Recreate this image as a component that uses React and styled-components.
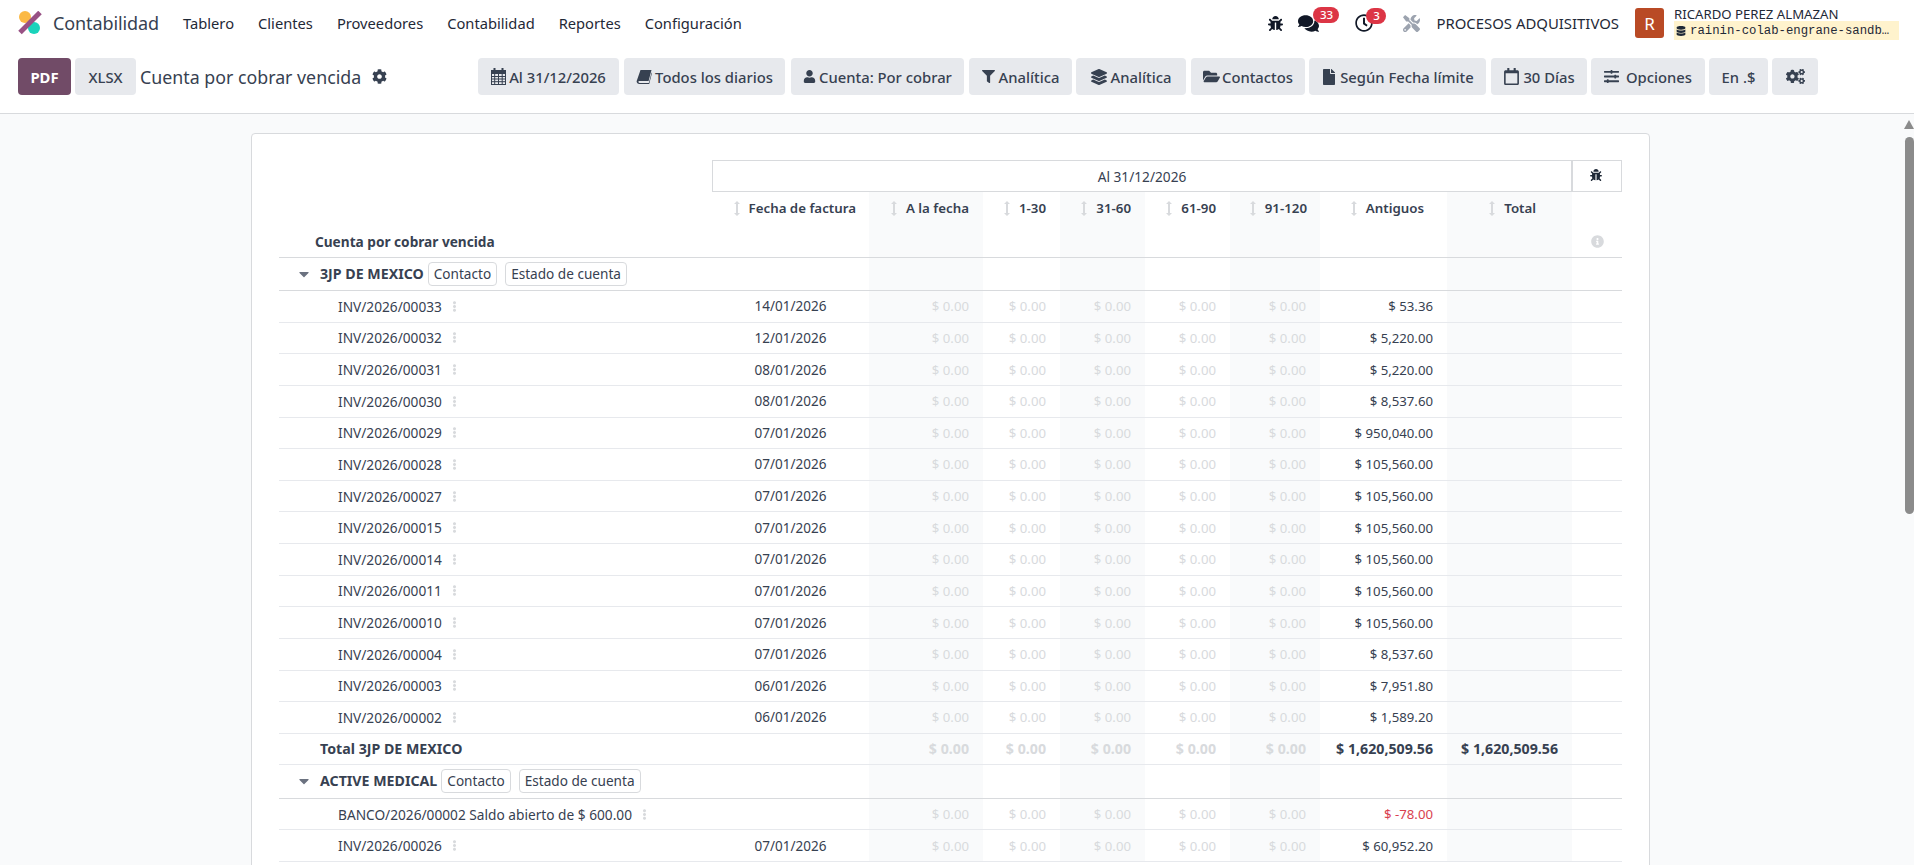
import React from "react";
import styled, { createGlobalStyle } from "styled-components";
import {
  FaBug, FaComments, FaRegClock, FaTools, FaCog, FaCogs, FaUser, FaFilter,
  FaLayerGroup, FaFolderOpen, FaFile, FaRegCalendar, FaSlidersH, FaDatabase, FaCaretDown, FaEllipsisV, FaInfoCircle,
} from "react-icons/fa";

const Global = createGlobalStyle`
  html, body { margin: 0; height: 100%; overflow: hidden; }
  body { font-family: "Noto Sans", "Open Sans", sans-serif; font-size: 14px; color: #374151; background: #fff; }
  #root { height: 100%; }
  * { box-sizing: border-box; }
`;

const Shell = styled.div`position: relative; display: flex; flex-direction: column; height: 865px; overflow: hidden;`;
const Navbar = styled.header`display: flex; align-items: center; height: 46px; padding: 0 15px 0 18px; flex: none;`;
const Logo = styled.svg`width: 24px; height: 24px; margin-right: 11px; flex: none;`;
const AppName = styled.span`font-size: 18px; margin-right: 24px; letter-spacing: -0.1px;`;
const MenuItem = styled.span`font-size: 14.7px; margin-right: 24px; color: #1f2937;`;
const Spacer = styled.div`flex: 1;`;
const SysIcon = styled.span`position: relative; display: inline-flex; align-items: center; color: #111827; font-size: ${p => p.$size || 16}px; margin-right: ${p => p.$mr || 0}px;`;
const Badge = styled.span`position: absolute; left: ${p => p.$left}px; top: -6px; height: 16px; min-width: ${p => p.$w}px; padding: 0 5px; border-radius: 8px; background: #dc3545; color: #fff; font-size: 11.5px; font-weight: 500; line-height: 16px; text-align: center;`;
const Company = styled.span`font-size: 14.9px; color: #1f2937; margin: 0 16px;`;
const Avatar = styled.span`width: 29px; height: 30px; border-radius: 3px; background: #b94a25; color: #fff; font-size: 17px; display: flex; align-items: center; justify-content: center; margin-right: 10px; flex: none;`;
const UserBox = styled.div`display: flex; flex-direction: column; width: 225px;`;
const UserName = styled.span`font-size: 13.2px; line-height: 14px; margin-top: 1px; color: #1f2937;`;
const DbName = styled.span`display: flex; align-items: center; gap: 4px; height: 19px; background: #fff3cd; font-family: "Liberation Mono", monospace; font-size: 12.3px; color: #1f2937; padding-left: 2px; white-space: nowrap; svg { font-size: 10px; }`;

const ControlPanel = styled.div`display: flex; align-items: center; height: 68px; padding: 0 0 6px 18px; border-bottom: 1px solid #d8dadd; flex: none;`;
const ActionBtn = styled.button`height: 37px; padding: 0; width: ${p => p.$w}px; margin-right: ${p => p.$mr || 0}px; border: 0; border-radius: 4px; background: ${p => (p.$primary ? "#714b67" : "#e7e9ed")}; color: ${p => (p.$primary ? "#fff" : "#374151")}; font: ${p => (p.$primary ? 700 : 500)} 14.8px "Noto Sans", sans-serif; display: inline-flex; align-items: center; justify-content: center; gap: ${p => p.$gap || 4}px; flex: none; svg { font-size: ${p => p.$icon || 15}px; }`;
const Title = styled.span`font-size: 17.8px; width: 338px; display: flex; align-items: center; gap: 11px; flex: none; margin-left: 4px; svg { font-size: 15px; }`;

const Main = styled.main`flex: 1; min-height: 0; background: #f9fafb; overflow: hidden; padding: 19px 0 0 251px;`;
const Sheet = styled.div`width: 1399px; background: #fff; border: 1px solid #d8dadd; border-radius: 4px; padding: 26px 27px;`;
const Table = styled.table`border-collapse: separate; border-spacing: 0; table-layout: fixed; width: 1343px; font-size: 13.2px;`;
const PeriodCell = styled.th`height: 32px; border: 1px solid #d8dadd; font-weight: 400; font-size: 13.7px; text-align: center; padding: 0;`;
const BugCell = styled.th`border: 1px solid #d8dadd; text-align: center; padding: 0 2px 0 0; font-size: 12px; color: #1f2937; font-weight: 400;`;
const HeadRow = styled.tr`height: 66px;`;
const HeadCell = styled.th`vertical-align: top; padding: 7px ${p => p.$pr ?? 14}px 0 0; text-align: right; font-size: 13.3px; font-weight: 600; background: ${p => (p.$shade ? "#f9fafb" : "#fff")}; border-bottom: 1px solid #d8dadd; white-space: nowrap;`;
const SortMark = styled.svg`width: 6px; height: 15px; fill: #d8dadd; margin-right: 9px; vertical-align: -3px;`;
const ReportName = styled.th`vertical-align: bottom; text-align: left; padding: 0 0 6px 36px; font-size: 13.65px; font-weight: 700; border-bottom: 1px solid #d8dadd; white-space: nowrap;`;
const InfoCell = styled.th`vertical-align: bottom; text-align: center; padding: 0 0 5px; color: #d8dadd; font-size: 13px; border-bottom: 1px solid #d8dadd;`;
const Row = styled.tr`height: ${p => p.$h || 31.64}px;`;
const Cell = styled.td`padding: 0 14px 0 0; text-align: right; white-space: nowrap; overflow: visible; border-bottom: 1px solid ${p => (p.$strong ? "#d8dadd" : "#e7e9ed")}; background: ${p => (p.$shade ? "#f9fafb" : "#fff")}; color: ${p => (p.$neg ? "#d9414f" : p.$muted ? "#d8dadd" : "#374151")}; font-weight: ${p => (p.$bold ? 700 : 400)}; font-size: ${p => (p.$bold ? "14.2px" : "13.2px")};`;
const NameCell = styled(Cell)`text-align: left; padding-left: ${p => p.$indent}px; color: #374151; font-size: ${p => (p.$bold ? "14.2px" : "13.7px")};`;
const DateCell = styled(Cell)`text-align: center; padding: 0; font-size: 13.5px;`;
const Dots = styled.span`color: #d8dadd; font-size: 11px; margin-left: 7px;`;
const Caret = styled.span`display: inline-block; width: 24px; color: #6b7280; font-size: 16px; vertical-align: -3px; line-height: 1;`;
const GroupName = styled.span`font-weight: 700; font-size: 14.2px;`;
const LinkBtn = styled.span`display: inline-block; height: 24px; line-height: 22px; padding: 0 5px; margin-left: ${p => p.$ml}px; border: 1px solid #d8dadd; border-radius: 4px; font-size: 13.6px; background: #fff;`;
const ScrollArrow = styled.div`position: absolute; right: 0; top: 120px; width: 0; height: 0; border-left: 5px solid transparent; border-right: 5px solid transparent; border-bottom: 9px solid #8b8b8b;`;
const ScrollThumb = styled.div`position: absolute; right: 0; top: 137px; width: 9.5px; height: 377px; border-radius: 5px; background: #8b8b8b;`;

const SortIcon = () => (
  <SortMark viewBox="0 0 6 15"><path d="M3 0 6 3H4V12H6L3 15 0 12H2V3H0Z" /></SortMark>
);
const CalendarGrid = () => (
  <svg width="15" height="17" viewBox="0 0 15 17" fill="none" stroke="currentColor" strokeWidth="1">
    <rect x="0.5" y="2.5" width="14" height="14" />
    <rect x="0.5" y="2.5" width="14" height="3" fill="currentColor" />
    <path d="M0 8.5H15M0 11H15M0 13.7H15M3.7 5V17M7.5 5V17M11.2 5V17" />
    <path d="M3.5 0V4M11.5 0V4" strokeWidth="2" />
  </svg>
);
const BookSlant = () => (
  <svg width="16" height="16" viewBox="0 0 16 16" fill="currentColor">
    <path d="M4.5 1H15.5L12.6 12H3.6C2.6 12 2.3 12.6 2.5 13.2 2.7 13.8 3.2 14 3.8 14H12.8L15.6 3.5 16 4 13.2 15H3.5C1.8 15 .6 13.8.6 12.3Z" />
  </svg>
);

const COLS = [433, 157, 114, 77, 85, 85, 90, 127, 125, 50];
const LABELS = [
  ["Fecha de factura", 13], ["A la fecha", 14], ["1-30", 14], ["31-60", 14],
  ["61-90", 14], ["91-120", 13], ["Antiguos", 23], ["Total", 36],
];
const isShaded = (i) => i === 2 || i === 4 || i === 6 || i === 8;

function ValueCells({ antiguos, total, neg, bold }) {
  return (
    <>
      {[2, 3, 4, 5, 6].map((i) => (
        <Cell key={i} $shade={isShaded(i)} $muted $bold={bold}>$ 0.00</Cell>
      ))}
      <Cell $neg={neg} $bold={bold}>{antiguos}</Cell>
      <Cell $shade $bold={bold}>{total}</Cell>
      <Cell />
    </>
  );
}

function GroupRow({ name, ml }) {
  return (
    <Row $h={ml ? 34 : 33}>
      <NameCell $indent={17} $strong colSpan={2}>
        <Caret><FaCaretDown /></Caret>
        <GroupName>{name}</GroupName>
        <LinkBtn $ml={4}>Contacto</LinkBtn>
        <LinkBtn $ml={8}>Estado de cuenta</LinkBtn>
      </NameCell>
      {[2, 3, 4, 5, 6, 7, 8, 9].map((i) => <Cell key={i} $shade={isShaded(i)} $strong />)}
    </Row>
  );
}

function InvoiceRow({ name, date, amount, neg }) {
  return (
    <Row>
      <NameCell $indent={59}>{name}<Dots><FaEllipsisV /></Dots></NameCell>
      <DateCell>{date}</DateCell>
      <ValueCells antiguos={amount} neg={neg} />
    </Row>
  );
}

const invoices = [
  ["INV/2026/00033", "14/01/2026", "$ 53.36"],
  ["INV/2026/00032", "12/01/2026", "$ 5,220.00"],
  ["INV/2026/00031", "08/01/2026", "$ 5,220.00"],
  ["INV/2026/00030", "08/01/2026", "$ 8,537.60"],
  ["INV/2026/00029", "07/01/2026", "$ 950,040.00"],
  ["INV/2026/00028", "07/01/2026", "$ 105,560.00"],
  ["INV/2026/00027", "07/01/2026", "$ 105,560.00"],
  ["INV/2026/00015", "07/01/2026", "$ 105,560.00"],
  ["INV/2026/00014", "07/01/2026", "$ 105,560.00"],
  ["INV/2026/00011", "07/01/2026", "$ 105,560.00"],
  ["INV/2026/00010", "07/01/2026", "$ 105,560.00"],
  ["INV/2026/00004", "07/01/2026", "$ 8,537.60"],
  ["INV/2026/00003", "06/01/2026", "$ 7,951.80"],
  ["INV/2026/00002", "06/01/2026", "$ 1,589.20"],
];

const filters = [
  { icon: <CalendarGrid />, label: "Al 31/12/2026", w: 141, mr: 5, gap: 3 },
  { icon: <BookSlant />, label: "Todos los diarios", w: 161, mr: 6, gap: 3 },
  { icon: <FaUser />, label: "Cuenta: Por cobrar", w: 173, mr: 5, gap: 3, size: 13 },
  { icon: <FaFilter />, label: "Analítica", w: 103, mr: 4, gap: 4, size: 13 },
  { icon: <FaLayerGroup />, label: "Analítica", w: 110, mr: 5, gap: 4, size: 16 },
  { icon: <FaFolderOpen />, label: "Contactos", w: 114, mr: 4, gap: 2, size: 17 },
  { icon: <FaFile />, label: "Según Fecha límite", w: 177, mr: 5, gap: 3, size: 16 },
  { icon: <FaRegCalendar />, label: "30 Días", w: 96, mr: 4, gap: 3, size: 17 },
  { icon: <FaSlidersH />, label: "Opciones", w: 114, mr: 4, gap: 7, size: 15 },
  { label: "En .$", w: 59, mr: 4 },
  { icon: <FaCogs />, w: 46, mr: 0, size: 19 },
];

export default function App() {
  return (
    <Shell>
      <Global />
      <Navbar>
        <Logo viewBox="0 0 24 24">
          <circle cx="7" cy="6" r="6" fill="#fbb945" />
          <circle cx="16" cy="17" r="6" fill="#1ad3bb" />
          <path d="M2 21.5 22 1.5" stroke="#985184" strokeWidth="5" />
        </Logo>
        <AppName>Contabilidad</AppName>
        {["Tablero", "Clientes", "Proveedores", "Contabilidad", "Reportes", "Configuración"].map((m) => (
          <MenuItem key={m}>{m}</MenuItem>
        ))}
        <Spacer />
        <SysIcon $size={15} $mr={15}><FaBug /></SysIcon>
        <SysIcon $size={21} $mr={36}><FaComments /><Badge $left={15} $w={26}>33</Badge></SysIcon>
        <SysIcon $size={18} $mr={30}><FaRegClock /><Badge $left={11} $w={20}>3</Badge></SysIcon>
        <SysIcon $size={17}><FaTools color="#9ca3af" /></SysIcon>
        <Company>PROCESOS ADQUISITIVOS</Company>
        <Avatar>R</Avatar>
        <UserBox>
          <UserName>RICARDO PEREZ ALMAZAN</UserName>
          <DbName><FaDatabase />rainin-colab-engrane-sandb…</DbName>
        </UserBox>
      </Navbar>
      <ControlPanel>
        <ActionBtn $primary $w={53} $mr={4}>PDF</ActionBtn>
        <ActionBtn $w={61}>XLSX</ActionBtn>
        <Title>Cuenta por cobrar vencida <FaCog /></Title>
        {filters.map((f, i) => (
          <ActionBtn key={i} $w={f.w} $mr={f.mr} $gap={f.gap} $icon={f.size}>{f.icon}{f.label}</ActionBtn>
        ))}
      </ControlPanel>
      <Main>
        <Sheet>
          <Table>
            <colgroup>{COLS.map((w, i) => <col key={i} style={{ width: w }} />)}</colgroup>
            <thead>
              <tr>
                <th />
                <PeriodCell colSpan={8}>Al 31/12/2026</PeriodCell>
                <BugCell><FaBug /></BugCell>
              </tr>
              <HeadRow>
                <ReportName>Cuenta por cobrar vencida</ReportName>
                {LABELS.map(([l, pr], i) => (
                  <HeadCell key={l} $pr={pr} $shade={isShaded(i + 1)}><SortIcon />{l}</HeadCell>
                ))}
                <InfoCell><FaInfoCircle /></InfoCell>
              </HeadRow>
            </thead>
            <tbody>
              <GroupRow name="3JP DE MEXICO" />
              {invoices.map(([n, d, a]) => <InvoiceRow key={n} name={n} date={d} amount={a} />)}
              <Row $h={31}>
                <NameCell $indent={41} $bold colSpan={2}>Total 3JP DE MEXICO</NameCell>
                <ValueCells antiguos="$ 1,620,509.56" total="$ 1,620,509.56" bold />
              </Row>
              <GroupRow name="ACTIVE MEDICAL" ml />
              <InvoiceRow name="BANCO/2026/00002 Saldo abierto de $ 600.00" amount="$ -78.00" neg />
              <InvoiceRow name="INV/2026/00026" date="07/01/2026" amount="$ 60,952.20" />
            </tbody>
          </Table>
        </Sheet>
      </Main>
      <ScrollArrow />
      <ScrollThumb />
    </Shell>
  );
}
